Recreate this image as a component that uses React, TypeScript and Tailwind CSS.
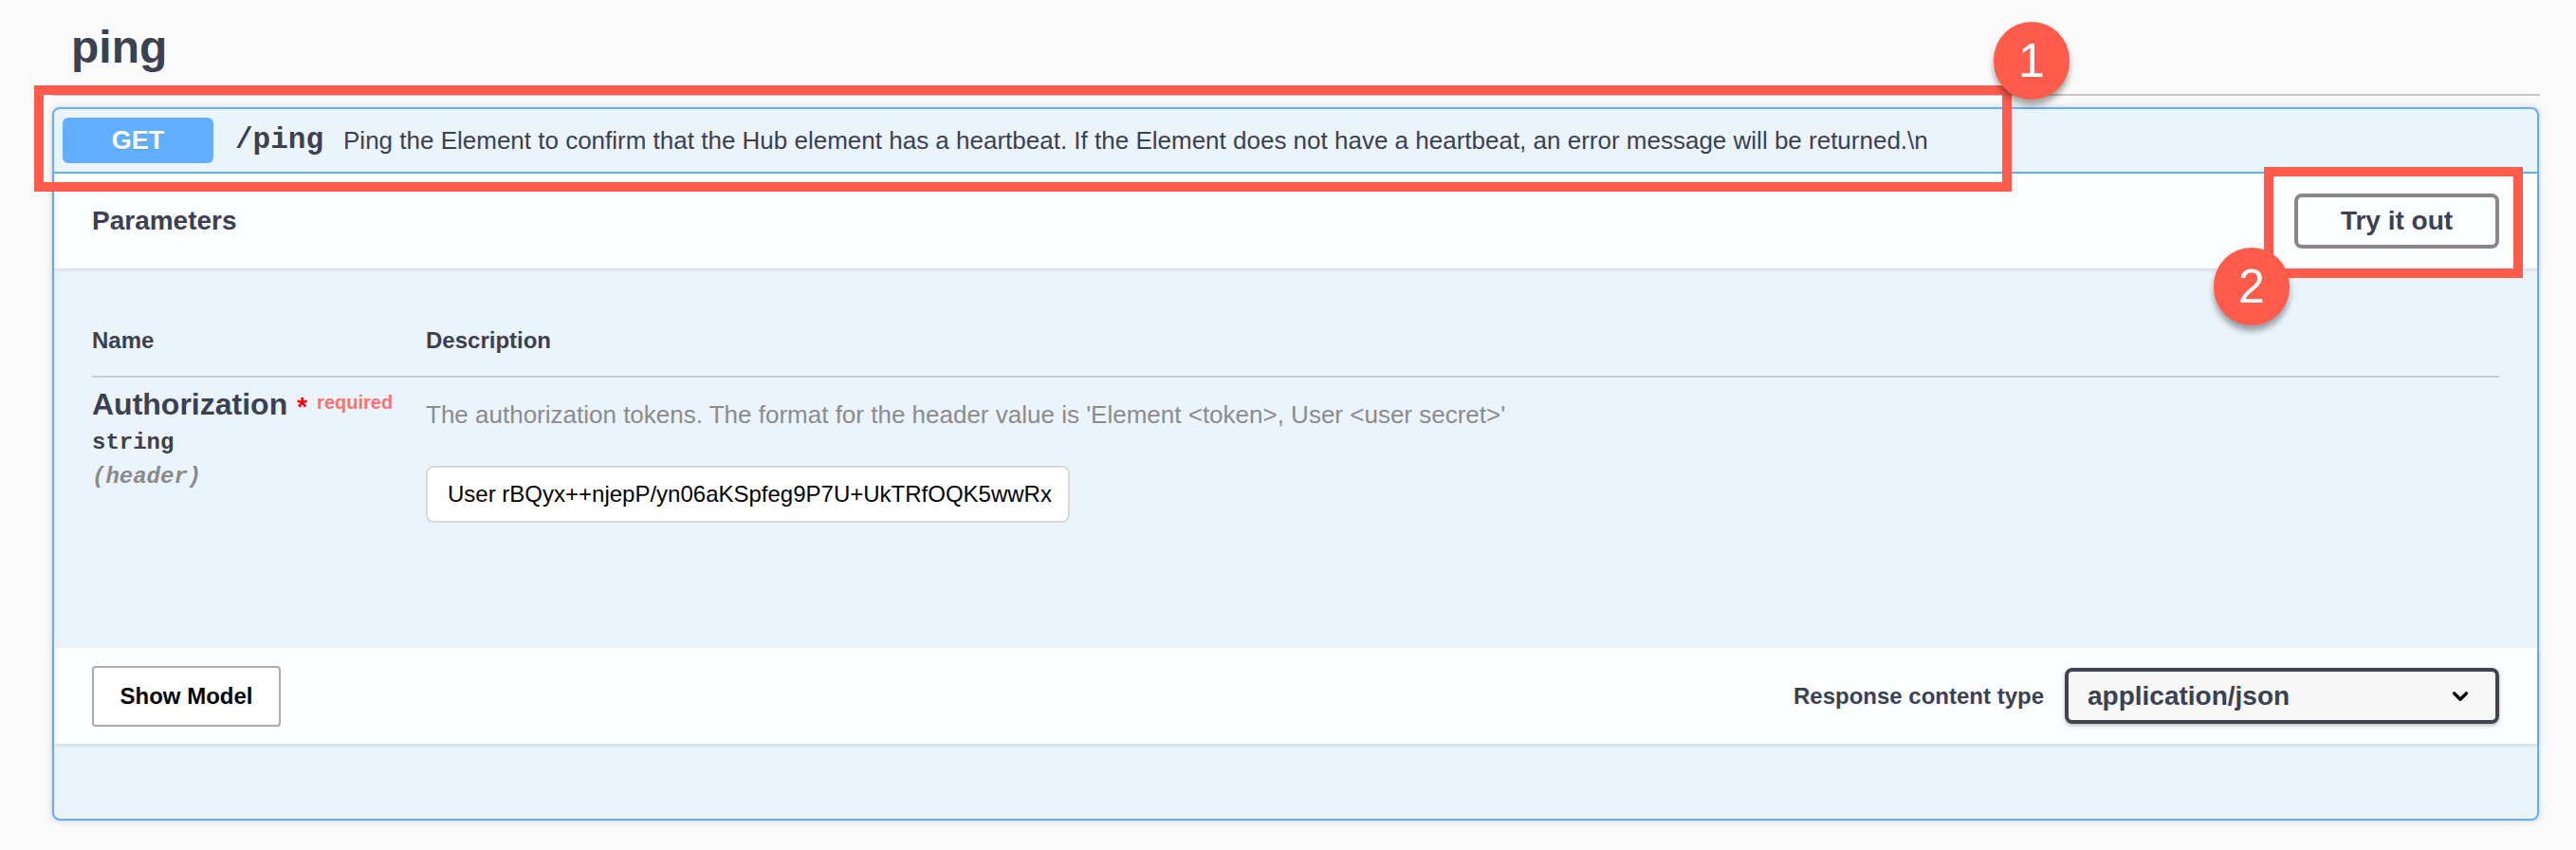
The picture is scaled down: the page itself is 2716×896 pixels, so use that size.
import { ChevronDown } from "lucide-react";

const ink = "text-[#3b4151]";

function Marker({ n, className }: { n: string; className: string }) {
	return (
		<div
			className={`absolute z-30 flex h-[82px] w-[80px] items-center justify-center rounded-full bg-[#ff5b4d] text-[50px] leading-none text-white shadow-[0_6px_6px_rgba(0,0,0,0.35)] ${className}`}
		>
			{n}
		</div>
	);
}

export default function App() {
	return (
		<div className="relative h-[896px] w-[2716px] overflow-hidden bg-[#fafafa] font-['Liberation_Sans',Arial,sans-serif]">
			{/* Tag heading */}
			<div className="ml-[55px] w-[2623px] border-b-2 border-[#c4c6cb] pb-[25px] pl-[20px] pt-[26px]">
				<h4 className={`text-[48px] font-bold leading-[48px] ${ink}`}>ping</h4>
			</div>

			{/* Operation block */}
			<div className="ml-[55px] mt-[12px] flex h-[752px] w-[2622px] flex-col rounded-[8px] border-2 border-[#61affe] bg-[#ebf3fb] shadow-[0_0_6px_rgba(0,0,0,0.19)]">
				{/* Summary */}
				<div className="flex h-[68px] items-center border-b-2 border-[#61affe] pl-[9px]">
					<div className="flex h-[48px] w-[159px] items-center justify-center rounded-[6px] bg-[#61affe] text-[27px] font-bold text-white [text-shadow:0_1px_0_rgba(0,0,0,0.1)]">
						GET
					</div>
					<span
						className={`ml-[23px] font-['Liberation_Mono',monospace] text-[31px] font-bold ${ink}`}
					>
						/ping
					</span>
					<span className={`ml-[21px] text-[26px] ${ink}`}>
						Ping the Element to confirm that the Hub element has a heartbeat. If the Element
						does not have a heartbeat, an error message will be returned.\n
					</span>
				</div>

				{/* Parameters header */}
				<div className="relative z-10 flex h-[100px] items-center justify-between bg-[#fcfdfe] pl-[40px] pr-[40px] shadow-[0_2px_4px_rgba(0,0,0,0.1)]">
					<h4 className={`text-[28px] font-bold ${ink}`}>Parameters</h4>
					<button
						className={`h-[58px] w-[216px] rounded-[8px] border-4 border-[#888] bg-[#fcfdfe] text-[28px] font-bold ${ink}`}
					>
						Try it out
					</button>
				</div>

				{/* Parameters table */}
				<div className="flex h-[400px] flex-col px-[40px] pt-[39px]">
					<div
						className={`flex h-[76px] items-center border-b-2 border-[#c5ccd5] text-[24px] font-bold ${ink}`}
					>
						<div className="w-[352px]">Name</div>
						<div>Description</div>
					</div>
					<div className="flex pt-[10px]">
						<div className="flex w-[352px] flex-col">
							<div className={`flex items-start text-[32px] font-bold leading-[37px] ${ink}`}>
								<span>Authorization</span>
								<span className="ml-[10px] mt-[2px] text-[28px] text-[#ff0000]">*</span>
								<span className="ml-[10px] mt-[-2px] text-[20px] text-[#ff7070]">required</span>
							</div>
							<div
								className={`mt-[6px] font-['Liberation_Mono',monospace] text-[24px] font-bold leading-[28px] ${ink}`}
							>
								string
							</div>
							<div className="mt-[8px] font-['Liberation_Mono',monospace] text-[24px] font-bold italic leading-[28px] text-[#8a8a8a]">
								(header)
							</div>
						</div>
						<div className="flex flex-col">
							<p className="mt-[14px] text-[26px] leading-[30px] text-[#8c8c8c]">
								The authorization tokens. The format for the header value is 'Element
								&lt;token&gt;, User &lt;user secret&gt;'
							</p>
							<div className="mt-[39px] flex h-[60px] w-[679px] items-center rounded-[8px] border-2 border-[#d9d9d9] bg-white pl-[21px] text-[24px] text-black">
								User rBQyx++njepP/yn06aKSpfeg9P7U+UkTRfOQK5wwRx
							</div>
						</div>
					</div>
				</div>

				{/* Footer */}
				<div className="flex h-[101px] items-center justify-between bg-[#fcfdfe] pl-[40px] pr-[40px] shadow-[0_2px_4px_rgba(0,0,0,0.1)]">
					<button className="h-[64px] w-[199px] rounded-[4px] border-2 border-[#aaa] bg-white text-[24px] font-bold text-black">
						Show Model
					</button>
					<div className="flex items-center gap-[22px]">
						<span className={`text-[24px] font-bold ${ink}`}>Response content type</span>
						<div
							className={`flex h-[59px] w-[458px] items-center justify-between rounded-[8px] border-4 border-[#41444e] bg-[#f7f7f7] pl-[20px] pr-[24px] text-[28px] font-bold shadow-[0_2px_4px_rgba(0,0,0,0.25)] ${ink}`}
						>
							<span>application/json</span>
							<ChevronDown className="h-[26px] w-[26px] text-black" strokeWidth={3} />
						</div>
					</div>
				</div>
			</div>

			{/* Annotations */}
			<div className="absolute left-[36px] top-[90px] z-20 h-[112px] w-[2085px] border-[10px] border-[#ff5b4d]" />
			<div className="absolute left-[2387px] top-[176px] z-20 h-[117px] w-[273px] border-[10px] border-[#ff5b4d]" />
			<Marker n="1" className="left-[2102px] top-[23px]" />
			<Marker n="2" className="left-[2334px] top-[261px]" />
		</div>
	);
}
